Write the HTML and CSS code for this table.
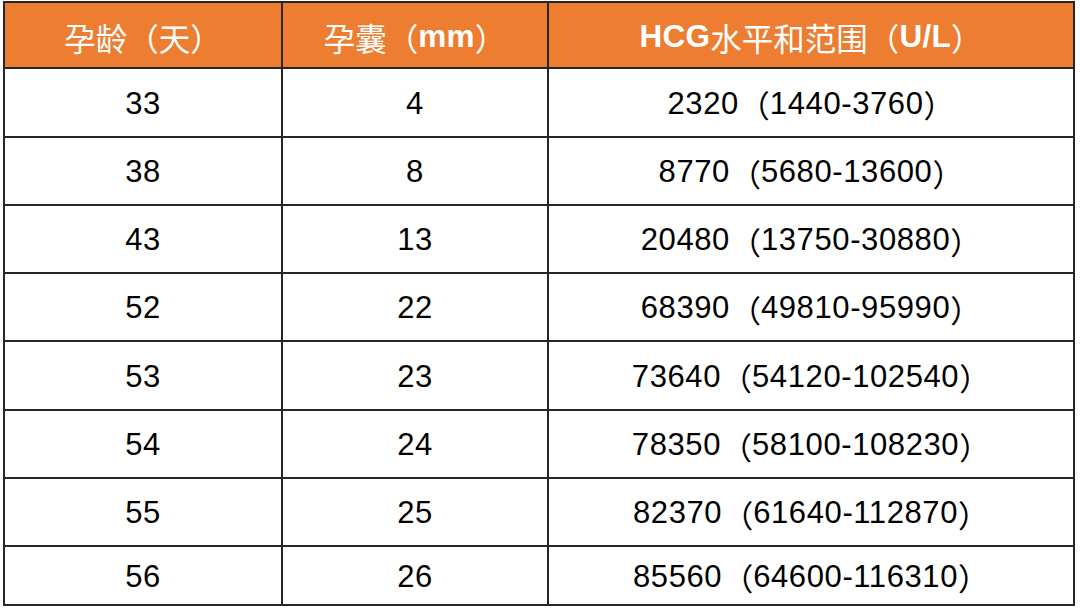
FILE: index.html
```html
<!DOCTYPE html>
<html lang="zh-CN">
<head>
<meta charset="utf-8">
<title>HCG</title>
<link rel="stylesheet" href="styles.css">
</head>
<body>
<div class="table">
  <div class="cell head"><span class="cjk">孕龄（天）</span></div>
  <div class="cell head"><span class="cjk">孕囊（</span><b class="lat">mm</b><span class="cjk">）</span></div>
  <div class="cell head"><b class="lat">HCG</b><span class="cjk">水平和范围（</span><b class="lat">U/L</b><span class="cjk">）</span></div>

  <div class="cell">33</div><div class="cell">4</div><div class="cell">2320<span class="cjk">（</span>1440-3760<span class="cjk">）</span></div>
  <div class="cell">38</div><div class="cell">8</div><div class="cell">8770<span class="cjk">（</span>5680-13600<span class="cjk">）</span></div>
  <div class="cell">43</div><div class="cell">13</div><div class="cell">20480<span class="cjk">（</span>13750-30880<span class="cjk">）</span></div>
  <div class="cell">52</div><div class="cell">22</div><div class="cell">68390<span class="cjk">（</span>49810-95990<span class="cjk">）</span></div>
  <div class="cell">53</div><div class="cell">23</div><div class="cell">73640<span class="cjk">（</span>54120-102540<span class="cjk">）</span></div>
  <div class="cell">54</div><div class="cell">24</div><div class="cell">78350<span class="cjk">（</span>58100-108230<span class="cjk">）</span></div>
  <div class="cell">55</div><div class="cell">25</div><div class="cell">82370<span class="cjk">（</span>61640-112870<span class="cjk">）</span></div>
  <div class="cell">56</div><div class="cell">26</div><div class="cell">85560<span class="cjk">（</span>64600-116310<span class="cjk">）</span></div>
</div>
</body>
</html>
```

FILE: styles.css
```css
html, body {
  margin: 0;
  padding: 0;
  background: #ffffff;
}

.table {
  margin: 1px 0 0 3px;
  width: 1072px;
  box-sizing: border-box;
  display: grid;
  grid-template-columns: 276px 264px 524px;
  grid-template-rows: 64px 67px 66px 66px 66px 67px 66px 66px 57px;
  gap: 2px;
  padding: 2px;
  background: #262626;
}

.cell {
  background: #ffffff;
  display: flex;
  align-items: center;
  justify-content: center;
  font-family: "Liberation Sans", Arial, "Noto Sans CJK SC", sans-serif;
  font-size: 31px;
  letter-spacing: 0.6px;
  color: #000000;
  white-space: nowrap;
  padding-top: 2px;
}

.cell .cjk {
  font-family: "Noto Sans CJK SC", sans-serif;
  letter-spacing: 0;
}

.head {
  background: #ed7d31;
  color: #ffffff;
  font-size: 31.5px;
  letter-spacing: 0;
  padding-top: 3px;
}

.head .cjk {
  font-weight: 400;
}

.head .lat {
  font-family: "Liberation Sans", Arial, sans-serif;
  font-weight: 700;
  letter-spacing: 0.3px;
}
```
